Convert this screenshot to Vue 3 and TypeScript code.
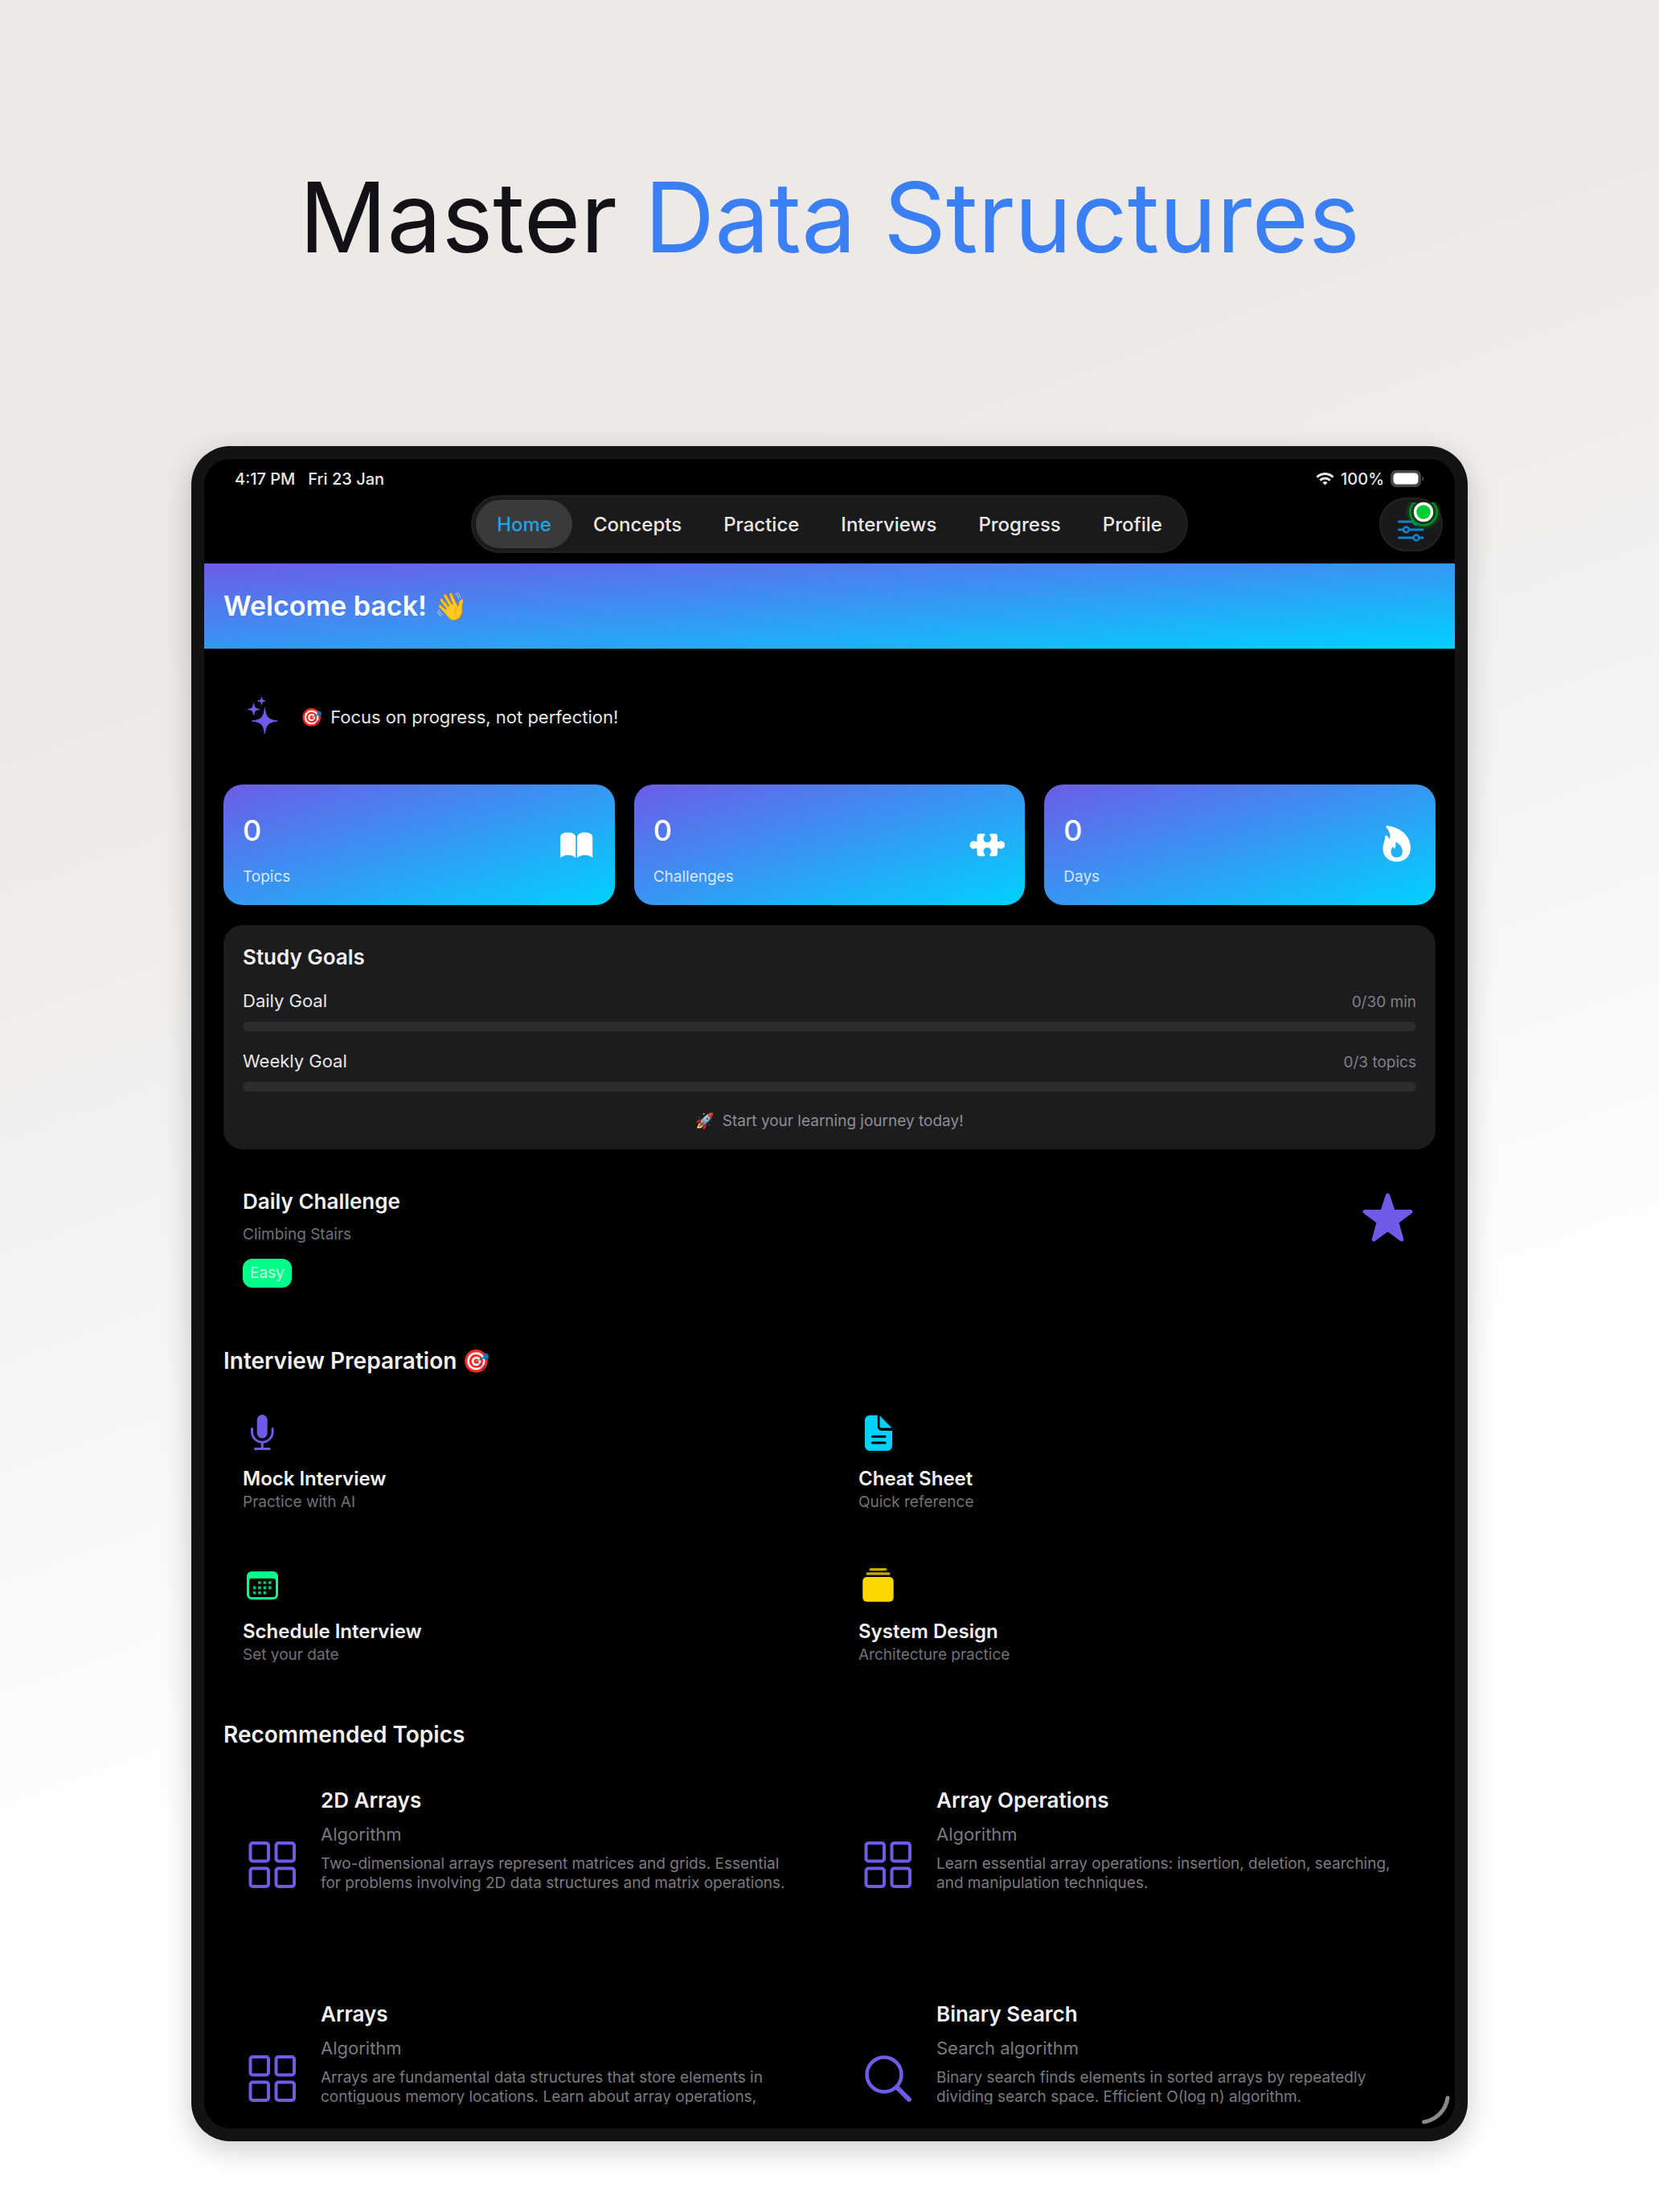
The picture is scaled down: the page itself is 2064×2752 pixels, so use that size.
<script setup lang="ts">
import { ref } from 'vue'

interface Stat { value: number; label: string; icon: 'book' | 'puzzle' | 'flame' }
interface Goal { id: string; label: string; done: number; target: number; unit: string }
interface Prep { title: string; sub: string; icon: 'mic' | 'doc' | 'calendar' | 'stack' }
interface Topic { title: string; kind: string; text: string; icon: 'grid' | 'search' }

const tabs: string[] = ['Home', 'Concepts', 'Practice', 'Interviews', 'Progress', 'Profile']
const active = ref('Home')

const stats: Stat[] = [
  { value: 0, label: 'Topics', icon: 'book' },
  { value: 0, label: 'Challenges', icon: 'puzzle' },
  { value: 0, label: 'Days', icon: 'flame' },
]

const goals: Goal[] = [
  { id: 'daily', label: 'Daily Goal', done: 0, target: 30, unit: 'min' },
  { id: 'weekly', label: 'Weekly Goal', done: 0, target: 3, unit: 'topics' },
]

const preps: Prep[] = [
  { title: 'Mock Interview', sub: 'Practice with AI', icon: 'mic' },
  { title: 'Cheat Sheet', sub: 'Quick reference', icon: 'doc' },
  { title: 'Schedule Interview', sub: 'Set your date', icon: 'calendar' },
  { title: 'System Design', sub: 'Architecture practice', icon: 'stack' },
]

const topics: Topic[] = [
  {
    title: '2D Arrays',
    kind: 'Algorithm',
    text: 'Two-dimensional arrays represent matrices and grids. Essential for problems involving 2D data structures and matrix operations.',
    icon: 'grid',
  },
  {
    title: 'Array Operations',
    kind: 'Algorithm',
    text: 'Learn essential array operations: insertion, deletion, searching, and manipulation techniques.',
    icon: 'grid',
  },
  {
    title: 'Arrays',
    kind: 'Algorithm',
    text: 'Arrays are fundamental data structures that store elements in contiguous memory locations. Learn about array operations,',
    icon: 'grid',
  },
  {
    title: 'Binary Search',
    kind: 'Search algorithm',
    text: 'Binary search finds elements in sorted arrays by repeatedly dividing search space. Efficient O(log n) algorithm.',
    icon: 'search',
  },
]
</script>

<template>
  <div class="page">
    <h1 class="headline">Master <span class="accent">Data Structures</span></h1>

    <div class="device">
      <div class="screen">
        <div class="status">
          <div class="status-left"><span>4:17 PM</span><span>Fri 23 Jan</span></div>
          <div class="status-right">
            <svg width="23" height="16" viewBox="0 0 23 16" fill="none" stroke="#e8e8e8" stroke-width="3">
              <path d="M1.5 5.6a14.2 14.2 0 0 1 20 0" />
              <path d="M5.3 9.6a8.8 8.8 0 0 1 12.4 0" />
              <path d="M11.5 15.6l-3-3.2a4.3 4.3 0 0 1 6 0z" fill="#e8e8e8" stroke="none" />
            </svg>
            <span>100%</span>
            <svg width="42" height="22" viewBox="0 0 42 22">
              <rect x="0" y="0" width="38" height="21" rx="7" fill="#464646" />
              <rect x="3.5" y="3.5" width="31" height="14" rx="4.5" fill="#fff" />
              <path d="M39.5 7.5c2.4.8 2.4 5.2 0 6z" fill="#5a5a5a" />
            </svg>
          </div>
        </div>

        <div class="topbar">
          <nav class="tabs" aria-label="Main">
            <button
              v-for="tab in tabs"
              :key="tab"
              type="button"
              class="tab"
              :class="{ on: tab === active }"
              @click="active = tab"
            >{{ tab }}</button>
          </nav>
          <button type="button" class="filter" aria-label="Filters">
            <svg width="79" height="67" viewBox="0 0 79 67" fill="none" stroke="#0f83cd" stroke-width="3" stroke-linecap="round">
              <path d="M24.5 30h18.5M50 30h4M24.5 40h5.5M37 40h17M24.5 50h18M49.5 50h4.5" />
              <circle cx="46" cy="30" r="3.4" stroke-width="2.6" />
              <circle cx="33.5" cy="40" r="3.4" stroke-width="2.6" />
              <circle cx="46" cy="50" r="3.4" stroke-width="2.6" />
            </svg>
            <svg class="dot" width="48" height="44" viewBox="0 0 48 44">
              <defs>
                <radialGradient id="halo">
                  <stop offset="0.6" stop-color="#0a9a30" stop-opacity="0.6" />
                  <stop offset="1" stop-color="#0a9a30" stop-opacity="0" />
                </radialGradient>
                <clipPath id="lid"><rect x="0" y="6" width="48" height="38" /></clipPath>
              </defs>
              <g clip-path="url(#lid)">
                <circle cx="24" cy="18" r="23" fill="url(#halo)" />
                <circle cx="24" cy="18" r="16.5" fill="#083f16" stroke="#0b8a2c" stroke-width="2.5" />
              </g>
              <circle cx="24" cy="18" r="10.5" fill="#08cc33" stroke="#fff" stroke-width="3.5" />
            </svg>
          </button>
        </div>

        <header class="banner"><h2>Welcome back! <span>👋</span></h2></header>

        <main class="content">
          <p class="quote">
            <svg width="48" height="49" viewBox="0 0 48 49" fill="#6c5ce7" stroke="#6c5ce7">
              <path d="M27.4 14c1.3 11.5 4.5 14.7 16 16-11.5 1.3-14.7 4.5-16 16-1.3-11.5-4.5-14.7-16-16 11.5-1.3 14.7-4.5 16-16z" />
              <path d="M13.7 8c.8 5.4 2.1 6.7 7.5 7.5-5.4.8-6.7 2.1-7.5 7.5-.8-5.4-2.1-6.7-7.5-7.5 5.4-.8 6.7-2.1 7.5-7.5z" />
              <path d="M23.4.3c.5 3.3 1.4 4.2 4.7 4.7-3.3.5-4.2 1.4-4.7 4.7-.5-3.3-1.4-4.2-4.7-4.7 3.3-.5 4.2-1.4 4.7-4.7z" />
            </svg>
            <span><span class="lead">🎯</span> Focus on progress, not perfection!</span>
          </p>

          <section class="stats">
            <div v-for="s in stats" :key="s.label" class="stat">
              <div class="stat-text">
                <strong>{{ s.value }}</strong>
                <span>{{ s.label }}</span>
              </div>
              <svg v-if="s.icon === 'book'" width="48" height="48" viewBox="0 0 48 48" fill="#fff">
                <path d="M4.2 15c0-4.5 3.8-6.3 9.5-6.3s9.6 1.8 9.6 6.3v25.3c-2.6-2.4-5.6-3.6-9.6-3.6s-7 1.2-9.5 3.6z" />
                <path d="M25.1 15c0-4.5 3.9-6.3 9.6-6.3s9.5 1.8 9.5 6.3v25.3c-2.5-2.4-5.5-3.6-9.5-3.6s-7 1.2-9.6 3.6z" />
              </svg>
              <svg v-else-if="s.icon === 'puzzle'" width="48" height="48" viewBox="0 0 48 48" fill="#fff">
                <path d="M16 10.3h4.6c1.6 0 2.2 1.3 1.4 2.5a4.8 4.8 0 1 0 6.6 0c-.8-1.2-.2-2.5 1.4-2.5h4.6a3.4 3.4 0 0 1 3.4 3.4v4.8c0 1.5 1.2 1.9 2.2 1.2a4.9 4.9 0 1 1 0 8.9c-1-.7-2.2-.3-2.2 1.2v5a3.4 3.4 0 0 1-3.4 3.4H30c-1.6 0-2.2-1.3-1.4-2.5a4.8 4.8 0 1 0-6.6 0c.8 1.2.2 2.5-1.4 2.5H16a3.4 3.4 0 0 1-3.4-3.4v-5c0-1.5-1.2-1.9-2.2-1.2a4.9 4.9 0 1 1 0-8.9c1 .7 2.2.3 2.2-1.2v-4.8a3.4 3.4 0 0 1 3.4-3.4z" />
              </svg>
              <svg v-else width="48" height="48" viewBox="0 0 48 48" fill="#fff" fill-rule="evenodd">
                <path d="M12.5.4C30 2.5 41 14 41 27.5 41 38 34 45 23.7 45 13.5 45 6.5 38.5 6.5 29c0-6 2.7-9.5 2.7-15 0-1.7 1.5-2 2.5-1 1.2 1 2 2.3 2.6 4C17 12 14.5 7 11.3 3.2 9.8 1.5 10.5.1 12.5.4zM22.3 20.2c.6 4.8-.6 6.8-1.3 9-1-.6-1.5-1.8-1.8-3-2 2-2.7 4-2.7 6.3 0 4.5 3 7.3 7.2 7.3s7.2-2.8 7.2-7.3c0-5-3.5-9.5-8.6-12.3z" />
              </svg>
            </div>
          </section>

          <section class="goals">
            <h3>Study Goals</h3>
            <div v-for="g in goals" :key="g.id" class="goal">
              <div class="goal-row">
                <span :id="g.id">{{ g.label }}</span>
                <span class="goal-count">{{ g.done }}/{{ g.target }} {{ g.unit }}</span>
              </div>
              <div class="bar" role="progressbar" :aria-labelledby="g.id" :aria-valuenow="g.done" :aria-valuemax="g.target">
                <div class="fill" :style="{ width: (g.done / g.target) * 100 + '%' }"></div>
              </div>
            </div>
            <p class="note"><span class="lead">🚀</span> Start your learning journey today!</p>
          </section>

          <section class="challenge">
            <div>
              <h3>Daily Challenge</h3>
              <p>Climbing Stairs</p>
              <span class="badge">Easy</span>
            </div>
            <svg width="72" height="72" viewBox="0 0 72 72" fill="#6c5ce7" stroke="#6c5ce7" stroke-width="5" stroke-linejoin="round">
              <path d="M36.5 8l6.8 20.5H65L47.7 41.3 53.8 63 36.5 50.3 19.2 63 25.3 41.3 8 28.5h21.7z" />
            </svg>
          </section>

          <h2 class="section-title">Interview Preparation <span>🎯</span></h2>
          <section class="preps">
            <article v-for="p in preps" :key="p.title" class="prep">
              <svg v-if="p.icon === 'mic'" width="48" height="48" viewBox="0 0 48 48" fill="none" stroke="#6c5ce7" stroke-width="3" stroke-linecap="round">
                <rect x="17.7" y="2" width="13" height="29.3" rx="6.5" fill="#6c5ce7" stroke="none" />
                <path d="M11.5 19.5v4a12.8 12.8 0 0 0 25.6 0v-4M24.3 36.5v8M15.5 44.5h17.6" />
              </svg>
              <svg v-else-if="p.icon === 'doc'" width="48" height="48" viewBox="0 0 48 48" fill="#00d2ff">
                <path d="M14 2.7h9.8V17a5 5 0 0 0 5 5H42v19a6 6 0 0 1-6 6H14a6 6 0 0 1-6-6V8.7a6 6 0 0 1 6-6z" />
                <path d="M26.5 3.2l15 15.3h-13a2 2 0 0 1-2-2z" />
                <path d="M17.5 29.3h15.5M17.5 37h15.5" stroke="#000" stroke-width="3" stroke-linecap="round" />
              </svg>
              <svg v-else-if="p.icon === 'calendar'" width="48" height="48" viewBox="0 0 48 48" fill="#00ff88">
                <path fill-rule="evenodd" d="M11 7h27a6 6 0 0 1 6 6v23a6 6 0 0 1-6 6H11a6 6 0 0 1-6-6V13a6 6 0 0 1 6-6zm0 8.7a3 3 0 0 0-3 3V36a3 3 0 0 0 3 3h27a3 3 0 0 0 3-3V18.7a3 3 0 0 0-3-3z" />
                <path fill="#00c46a" d="M19.2 19.2h3.6v3.6h-3.6zM25.6 19.2h3.6v3.6h-3.6zM32 19.2h3.6v3.6h-3.6zM12.8 25.6h3.6v3.6h-3.6zM19.2 25.6h3.6v3.6h-3.6zM25.6 25.6h3.6v3.6h-3.6zM32 25.6h3.6v3.6h-3.6zM12.8 32h3.6v3.6h-3.6zM19.2 32h3.6v3.6h-3.6zM25.6 32h3.6v3.6h-3.6z" />
              </svg>
              <svg v-else width="48" height="48" viewBox="0 0 48 48" fill="#ffd700">
                <rect x="13.5" y="3" width="22" height="3.2" rx="1.6" fill="#c9a800" />
                <rect x="9.5" y="8.3" width="30" height="3.2" rx="1.6" fill="#c9a800" />
                <rect x="5.3" y="14" width="38.4" height="30.7" rx="5" />
              </svg>
              <h4>{{ p.title }}</h4>
              <p>{{ p.sub }}</p>
            </article>
          </section>

          <h2 class="section-title">Recommended Topics</h2>
          <section class="topics">
            <article v-for="t in topics" :key="t.title" class="topic">
              <svg v-if="t.icon === 'grid'" width="73" height="58" viewBox="0 0 73 58" fill="none" stroke="#6c5ce7" stroke-width="4">
                <rect x="9.5" y="2" width="22.5" height="22.5" rx="3" />
                <rect x="41.5" y="2" width="22.5" height="22.5" rx="3" />
                <rect x="9.5" y="33.5" width="22.5" height="22.5" rx="3" />
                <rect x="41.5" y="33.5" width="22.5" height="22.5" rx="3" />
              </svg>
              <svg v-else width="73" height="58" viewBox="0 0 73 58" fill="none" stroke="#6c5ce7">
                <circle cx="32" cy="24" r="21.5" stroke-width="4.5" />
                <path d="M48 40l15 15" stroke-width="6" stroke-linecap="round" />
              </svg>
              <div class="topic-text">
                <h3>{{ t.title }}</h3>
                <p class="kind">{{ t.kind }}</p>
                <p class="desc">{{ t.text }}</p>
              </div>
            </article>
          </section>
        </main>

        <svg class="corner" width="38" height="38" viewBox="0 0 38 38" fill="none" stroke="#8a8a8a" stroke-width="5" stroke-linecap="round">
          <path d="M34 4C31.5 20 20 31.5 4.5 34" />
        </svg>
      </div>
    </div>
  </div>
</template>

<style>
body {
  margin: 0;
}
</style>

<style scoped>
.page {
  box-sizing: border-box;
  min-height: 100vh;
  padding: 190px 238px 88px;
  background: linear-gradient(160deg, #ece9e6 25%, #ffffff 68%);
  font-family: Inter, "Liberation Sans", sans-serif;
  color: #f2f2f2;
}

h1, h2, h3, h4, p {
  margin: 0;
}

svg {
  display: block;
  flex: none;
}

button {
  font: inherit;
  border: 0;
  padding: 0;
  cursor: pointer;
}

.headline {
  margin-bottom: 205px;
  text-align: center;
  font-size: 121px;
  line-height: 160px;
  font-weight: 400;
  color: #111116;
  white-space: nowrap;
}

.accent {
  color: #3b7ff5;
}

.device {
  box-sizing: border-box;
  aspect-ratio: 1588 / 2109;
  padding: 16px;
  border-radius: 48px;
  background: #131315;
  box-shadow: 0 10px 36px rgba(0, 0, 0, 0.2);
}

.screen {
  position: relative;
  box-sizing: border-box;
  height: 100%;
  display: flex;
  flex-direction: column;
  padding-bottom: 30px;
  border-radius: 32px;
  background: #000;
  overflow: hidden;
}

.status {
  display: flex;
  justify-content: space-between;
  padding: 12px 38px 0;
  font-size: 20px;
  line-height: 26px;
  font-weight: 500;
  color: #e8e8e8;
}

.status-left {
  display: flex;
  gap: 16px;
}

.status-right {
  display: flex;
  align-items: center;
  gap: 8px;
}

.topbar {
  display: grid;
  grid-template-columns: 1fr auto 1fr;
  align-items: center;
  padding: 7px 15px 13px;
}

.tabs {
  grid-column: 2;
  display: flex;
  box-sizing: border-box;
  height: 72px;
  padding: 4px;
  border: 2px solid #202020;
  border-radius: 36px;
  background: #1a1a1a;
}

.tab {
  padding: 0 26px;
  border-radius: 30px;
  background: none;
  color: #e8e8e8;
  font-size: 24px;
  font-weight: 500;
}

.tab.on {
  background: #3a3a3a;
  color: #1fa2ea;
}

.filter {
  position: relative;
  justify-self: end;
  width: 79px;
  height: 67px;
  border-radius: 34px;
  background: #191919;
  box-shadow: inset 0 0 0 2px #222;
}

.dot {
  position: absolute;
  top: 0;
  right: 0;
}

.banner {
  padding: 32px 24px;
  background: linear-gradient(to bottom right, #6c5ce7, #00d2ff);
  color: #fff;
}

.banner h2 {
  font-size: 34px;
  line-height: 42px;
  font-weight: 600;
}

.content {
  flex: 1;
  min-height: 0;
  overflow: hidden;
  padding: 0 24px;
}

.quote {
  display: flex;
  align-items: center;
  gap: 24px;
  padding: 60px 24px;
  font-size: 22px;
  line-height: 28px;
  color: #e6e6e6;
}

.lead {
  margin-right: 4px;
}

.stats {
  display: grid;
  grid-template-columns: repeat(3, 1fr);
  gap: 24px;
}

.stat {
  display: flex;
  align-items: center;
  justify-content: space-between;
  padding: 0 24px;
  border-radius: 24px;
  background: linear-gradient(to bottom right, #6c5ce7, #00d2ff);
  color: #fff;
}

.stat-text {
  display: flex;
  flex-direction: column;
  gap: 24px;
  padding: 35px 0 23px;
}

.stat-text strong {
  font-size: 36px;
  line-height: 44px;
  font-weight: 500;
}

.stat-text span {
  font-size: 19px;
  line-height: 24px;
  color: rgba(255, 255, 255, 0.8);
}

h3 {
  font-size: 26px;
  line-height: 32px;
  font-weight: 600;
}

.goals {
  margin-top: 25px;
  padding: 24px 24px 21px;
  border-radius: 24px;
  background: #1c1c1e;
}

.goals h3 {
  margin-bottom: 24px;
}

.goal {
  margin-bottom: 23px;
}

.goal-row {
  display: flex;
  align-items: baseline;
  justify-content: space-between;
  margin-bottom: 10px;
  font-size: 22px;
  line-height: 28px;
  color: #e6e6e6;
}

.goal-count {
  font-size: 19px;
  color: #808085;
}

.bar {
  height: 12px;
  border-radius: 6px;
  background: #2c2c2e;
  overflow: hidden;
}

.fill {
  height: 100%;
  background: #6c5ce7;
}

.note {
  text-align: center;
  font-size: 19px;
  line-height: 28px;
  color: #8e8e93;
}

.challenge {
  display: flex;
  justify-content: space-between;
  align-items: flex-start;
  padding: 49px 24px 24px;
}

.challenge p {
  margin: 13px 0 18px;
  font-size: 19px;
  line-height: 24px;
  color: #717176;
}

.badge {
  display: inline-block;
  padding: 0 9px;
  border-radius: 12px;
  background: #00ff88;
  color: rgba(255, 255, 255, 0.8);
  font-size: 19px;
  line-height: 36px;
}

.section-title {
  margin: 49px 0 24px;
  font-size: 28px;
  line-height: 36px;
  font-weight: 600;
}

.preps,
.topics {
  display: grid;
  grid-template-columns: 1fr 1fr;
  gap: 24px;
}

.prep {
  padding: 23px 24px;
}

.prep h4 {
  margin: 19px 0 2px;
  font-size: 24px;
  line-height: 30px;
  font-weight: 600;
}

.prep p {
  height: 21px;
  overflow: hidden;
  font-size: 19px;
  line-height: 24px;
  color: #717176;
}

.topics {
  row-gap: 26px;
}

.topic {
  box-sizing: border-box;
  min-height: 240px;
  display: flex;
  align-items: center;
  gap: 24px;
  padding: 24px;
}

.topic-text {
  align-self: flex-start;
  padding-right: 8px;
}

.kind {
  margin: 12px 0 11px;
  font-size: 22px;
  line-height: 28px;
  color: #7a7a7f;
}

.desc {
  font-size: 19px;
  line-height: 24px;
  color: #7a7a7f;
}

.corner {
  position: absolute;
  right: 5px;
  bottom: 4px;
}
</style>
